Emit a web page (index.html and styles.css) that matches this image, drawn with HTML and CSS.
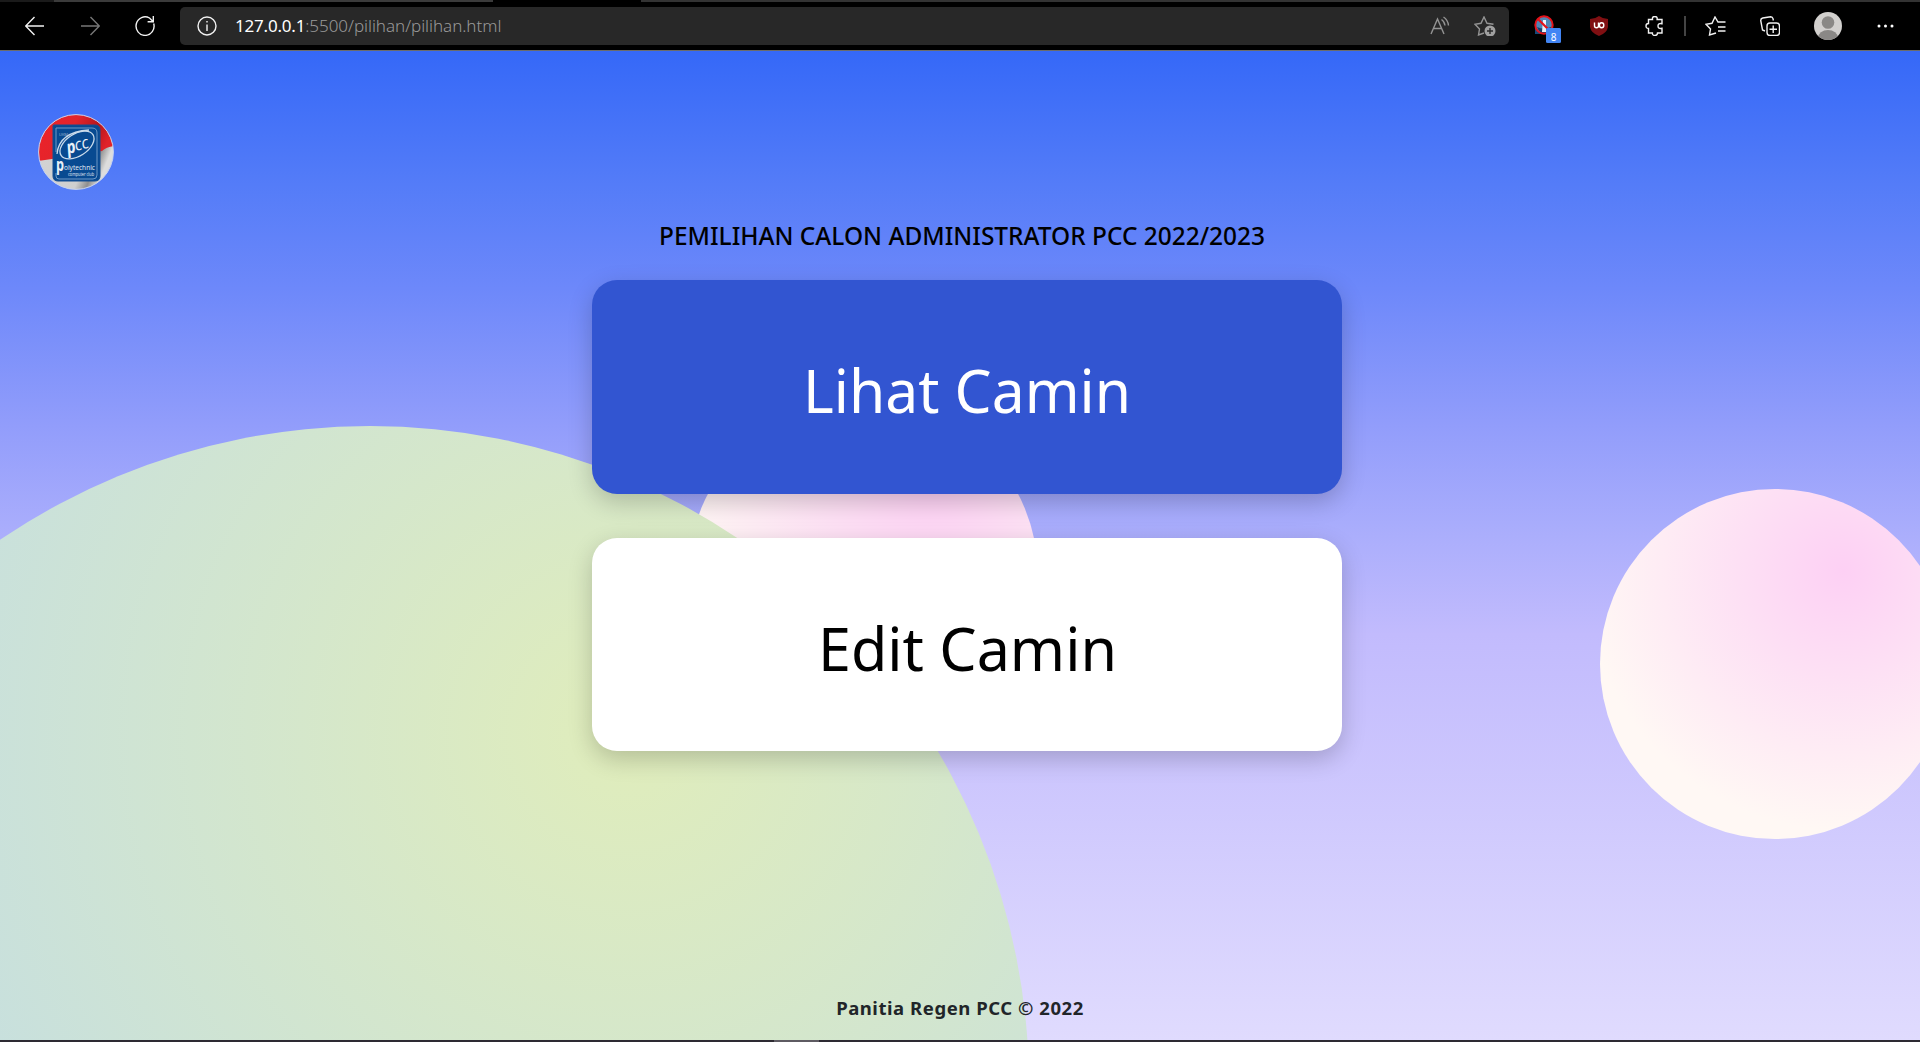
FILE: index.html
```html
<!DOCTYPE html>
<html lang="id">
<head>
<meta charset="utf-8">
<title>Pemilihan Camin</title>
<link rel="stylesheet" href="styles.css">
</head>
<body>
<header class="browser">
  <div class="tabstrip"><span class="tab-a"></span><span class="tab-b"></span><span class="tab-c"></span></div>
  <div class="toolbar">
    <nav class="nav">
      <svg class="ic" viewBox="0 0 20 20"><path d="M9.500 1 .7 10l8.800 9M.7 10H19"/></svg>
      <svg class="ic dim" viewBox="0 0 20 20"><path d="M10.500 1l8.800 9-8.800 9M19.300 10H1"/></svg>
      <svg class="ic" viewBox="0 0 20 20"><path d="M18.700 7.500A9 9.300 0 1 1 14.500 2l3.500 3.500M18.300 0v5.700h-5.700"/></svg>
    </nav>
    <div class="address">
      <svg class="ic info" viewBox="0 0 20 20"><circle cx="10" cy="10" r="9"/><path d="M10 8.500V15M10 5v1.500"/></svg>
      <span class="url"><b>127.0.0.1</b>:5500/pilihan/pilihan.html</span>
      <svg class="ic read" viewBox="0 0 20 20"><path d="M1 18 7.500 3 14 18M3.500 12.500h8M11.500 3.500q3 2 3.500 6M13.500 1q4.500 3 5 8.500"/></svg>
      <svg class="ic fav" viewBox="0 0 22 20"><path d="M10 17 4.500 19l1-6L1 8.300l6-1L10 1l3 6.300 6.500 1"/><circle class="fill" cx="16" cy="15" r="5.500"/><path class="cut" d="M13 15h6M16 12v6"/></svg>
    </div>
    <div class="tools">
      <svg class="blocker" viewBox="0 0 30 30"><path d="M1 10h9v9H1z" fill="#134a7c"/><circle cx="10" cy="10" r="8.500" fill="#4f87b5"/><path d="M3 12q7 3 14 0v4q-7 5-12 0z" fill="#143f6b"/><path d="M9 5h3v12H8z" fill="#e8f2fa"/><circle cx="10" cy="10" r="8.700" fill="none" stroke="#e51118" stroke-width="2"/><path d="M4 4l12 12" stroke="#e51118" stroke-width="2.200"/><rect x="12" y="13" width="15" height="15" rx="1.500" fill="#4285f4"/><text x="19.500" y="25.500" text-anchor="middle">8</text></svg>
      <svg class="shield" viewBox="0 0 20 20"><path d="M10 0q4 3 9 3v8q-1 6-9 9-8-3-9-9V3q5 0 9-3z" fill="#800f12"/><path d="M5.500 6.500v3.200q0 2 2 2t2-2V6.500" fill="none" stroke="#fff" stroke-width="1.400"/><ellipse cx="12.600" cy="9.200" rx="2.200" ry="2.500" fill="none" stroke="#fff" stroke-width="1.400"/></svg>
      <svg class="ic puzzle" viewBox="0 0 20 20"><path d="M3.500 3.500h4q-.5-3 2.300-3t2.300 3H17v4.200q-4-1-4 2.300t4 2.300V17h-4.500q0 2.500-2.600 2.500T7.400 17H3.500v-4.500Q1 12.500 1 10t2.500-2.500z"/></svg>
      <span class="divider"></span>
      <svg class="ic favs" viewBox="0 0 21 20"><path d="M11 17 4.500 19l1-6L1 8.300l6-1L10 1l3 5h7.500M13 11h7.500M13 15h7.500"/></svg>
      <svg class="ic coll" viewBox="0 0 20 20"><rect x="7" y="7" width="12.500" height="12.500" rx="3"/><path d="M13.200 9.500v7.500M9.500 13.200H17M5 15 2.500 14 .7 4.500q0-2 2-2.500l8-1.300q1.800 0 2.300 2l.4 1.800"/></svg>
      <svg class="avatar" viewBox="0 0 28 28"><clipPath id="face"><circle cx="14" cy="14" r="14"/></clipPath><g clip-path="url(#face)"><path d="M0 0h28v28H0z" fill="#d2d0ce"/><g fill="#8a8886"><circle cx="14" cy="10.500" r="6.300"/><ellipse cx="14" cy="26" rx="10" ry="8"/></g></g></svg>
      <svg class="more" viewBox="0 0 17 4"><circle cx="2" cy="2" r="1.500"/><circle cx="8.500" cy="2" r="1.500"/><circle cx="15" cy="2" r="1.500"/></svg>
    </div>
  </div>
</header>
<main class="page">
  <div class="circle circle-mid"></div>
  <div class="circle circle-big"></div>
  <div class="circle circle-right"></div>
  <svg class="logo" viewBox="0 0 76 76">
    <defs><clipPath id="disc"><circle cx="38" cy="38" r="37.500"/></clipPath>
    <linearGradient id="cloth" x1="0" y1="0" x2="1" y2=".3"><stop offset="0" stop-color="#ed2229"/><stop offset=".5" stop-color="#e3242b"/><stop offset=".8" stop-color="#b5161d"/><stop offset="1" stop-color="#e0222a"/></linearGradient>
    <linearGradient id="white" x1="0" y1="0" x2="1" y2=".4"><stop offset="0" stop-color="#d5d5d5"/><stop offset=".75" stop-color="#cfcfcf"/><stop offset=".88" stop-color="#8f8f8f"/><stop offset="1" stop-color="#ddd"/></linearGradient></defs>
    <g clip-path="url(#disc)"><path d="M0 0h76v76H0z" fill="url(#white)"/><path d="M0 0h76v32q-8 1-12 5l-50 8-14 2z" fill="url(#cloth)"/></g>
    <path d="M16 11h41q5 0 5 5v46q0 5-5 5H20q-5 0-5-5V12q0-1 1-1z" fill="#084a91" stroke="#164f91"/>
    <path d="M18 38V14h36q5 0 5 5v42q0 4-4 4H21q-3 0-3-3v-3" fill="none" stroke="#6e98c6"/>
    <ellipse cx="39" cy="31" rx="19" ry="11" transform="rotate(-33 39 31)" fill="none" stroke="#c8daeb" stroke-width="1.300"/>
    <path d="M19 40Q21 18 51 16" fill="none" stroke="#c8daeb" stroke-width="1.300"/>
    <g class="logo-text"><text x="21" y="22" font-size="4" opacity=".6">UKM</text><text x="30" y="40" font-size="18" font-weight="bold" font-style="italic" transform="rotate(-14 30 40)" textLength="9" lengthAdjust="spacingAndGlyphs">p</text><text x="38" y="37" font-size="17" font-style="italic" transform="rotate(-14 38 37)" textLength="14" lengthAdjust="spacingAndGlyphs">cc</text><text x="18" y="57" font-size="17" font-weight="bold" textLength="8" lengthAdjust="spacingAndGlyphs">p</text><text x="26" y="56" font-size="8" textLength="31" lengthAdjust="spacingAndGlyphs">olytechnic</text><text x="30" y="61.500" font-size="5" textLength="26" lengthAdjust="spacingAndGlyphs">computer club</text></g>
    <circle cx="38" cy="38" r="37.400" fill="none" stroke="#c5d2f2"/>
  </svg>
  <section class="content">
    <h1><svg class="fit" width="606" height="36"><text x="0" y="26" textLength="606" lengthAdjust="spacingAndGlyphs">PEMILIHAN CALON ADMINISTRATOR PCC 2022/2023</text></svg></h1>
    <a class="card card-view"><svg class="fit" width="328" height="90"><text x="0" y="71" textLength="328" lengthAdjust="spacingAndGlyphs">Lihat Camin</text></svg></a>
    <a class="card card-edit"><svg class="fit" width="299" height="90"><text x="0" y="71" textLength="299" lengthAdjust="spacingAndGlyphs">Edit Camin</text></svg></a>
  </section>
  <footer>Panitia Regen PCC © 2022</footer>
</main>
<div class="taskbar"><span></span></div>
</body>
</html>
```
FILE: styles.css
```css
* { box-sizing: border-box; }
body { margin: 0; width: 1920px; height: 1042px; overflow: hidden; display: flex; flex-direction: column; font-family: "Noto Sans", sans-serif; background: #000; }
.browser { height: 51px; flex: none; background: #000; border-bottom: 1px solid #6b6b6b; }
.tabstrip { height: 2px; display: flex; background: #333; }
.tab-a { width: 54px; background: #1a1a1a; }
.tab-b { width: 439px; background: #3b3b3b; }
.tab-c { width: 148px; background: #000; }
.toolbar { height: 48px; display: flex; align-items: center; }
.nav { width: 180px; padding-left: 25px; display: flex; gap: 35px; }
.ic { width: 20px; height: 20px; fill: none; stroke: #f2f2f2; stroke-width: 1.4; flex: none; }
.dim { stroke: #777; }
.address { width: 1329px; height: 38px; border-radius: 5px; background: #282828; display: flex; align-items: center; padding: 0 13px 0 17px; }
.url { margin-left: 18px; font-size: 17px; font-weight: 300; letter-spacing: -.03px; color: #999; flex: 1; line-height: 36px; }
.url b { font-weight: 400; color: #fff; letter-spacing: -.2px; }
.read, .fav { stroke: #949494; }
.fav { width: 22px; margin-left: 24px; }
.fav .fill { fill: #a0a0a0; stroke: none; }
.fav .cut { stroke: #282828; }
.tools { flex: 1; display: flex; align-items: center; padding-left: 25px; }
.blocker { width: 30px; height: 30px; margin-top: 8px; }
.blocker text { fill: #fff; font-size: 10px; }
.shield { width: 20px; height: 20px; margin-left: 25px; }
.puzzle { margin-left: 36px; }
.divider { width: 2px; height: 20px; background: #444; margin-left: 19px; }
.favs { width: 21px; margin-left: 19px; }
.coll { margin-left: 34px; }
.avatar { width: 28px; height: 28px; margin-left: 34px; }
.more { width: 17px; height: 4px; margin-left: 35px; fill: #fff; }
.page { position: relative; flex: none; height: 989px; overflow: hidden; background: linear-gradient(180deg, #3568f8 0%, #547cf8 13.5%, #6d88fa 24%, #929dfb 38%, #abaefc 49%, #c2bbfd 59%, #e0dbfe 100%); }
.circle { position: absolute; border-radius: 50%; }
.circle-mid { left: 688px; top: 349px; width: 350px; height: 350px; background: radial-gradient(circle at 69.5% 23.3%, #fdd0f4 0, #fde0f4 105px, #fff8f4 260px); }
.circle-right { left: 1600px; top: 438px; width: 350px; height: 350px; background: radial-gradient(circle at 69.5% 23.3%, #fdd0f4 0, #fde0f4 105px, #fff8f4 260px); }
.circle-big { left: -289px; top: 375px; width: 1318px; height: 1320px; background: radial-gradient(circle at 69.5% 23.3%, #e0edbb 0, #c6dfe0 760px); }
.logo { position: absolute; left: 38px; top: 63px; width: 76px; height: 76px; }
.logo-text { fill: #e8f0f8; font-family: "Open Sans", sans-serif; }
.content { position: relative; width: 750px; margin-left: 592px; padding-top: 168px; }
.fit { display: block; overflow: visible; fill: currentColor; }
h1 { margin: 0 0 25px 67px; height: 36px; font-size: 25px; font-weight: 500; }
.card { height: 214px; border-radius: 25px; display: flex; align-items: center; justify-content: center; font-size: 61px; font-weight: 400; box-shadow: 0 8px 24px rgba(0,0,0,.2); }
.card-view { background: #3255d1; color: #fff; }
.card-edit { background: #fff; color: #000; margin-top: 44px; height: 213px; }
footer { position: absolute; left: 0; width: 100%; top: 943px; text-align: center; font-size: 18.5px; font-weight: 700; letter-spacing: .55px; color: #212529; line-height: 28px; }
.taskbar { height: 2px; background: #2d2a32; padding-left: 774px; }
.taskbar span { display: block; width: 45px; height: 2px; background: #5e5b62; }
```
